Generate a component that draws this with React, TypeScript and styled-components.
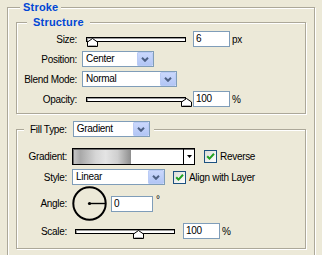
import styled, { createGlobalStyle } from "styled-components";

const GlobalStyle = createGlobalStyle`
  html, body {
    margin: 0;
    padding: 0;
    background: #ece9d8;
  }
  body {
    font-family: "Liberation Sans", Arial, sans-serif;
    font-size: 10px;
    letter-spacing: -0.3px;
    color: #000;
  }
`;

const Dialog = styled.div`
  width: 322px;
  height: 255px;
  overflow: hidden;
  padding-left: 7px;
  box-sizing: border-box;
`;

const GroupBox = styled.fieldset<{ $width?: number; $pad: string; $mt?: number }>`
  margin: ${(p) => p.$mt ?? 0}px 0 0;
  padding: ${(p) => p.$pad};
  min-width: 0;
  ${(p) => (p.$width ? `width: ${p.$width}px;` : "")}
  box-sizing: border-box;
  border: 1px solid #aca899;
  box-shadow: 1px 1px 0 #fff, inset 1px 1px 0 #fff;
`;

const Title = styled.legend<{ $ml: number; $pad: string }>`
  margin-left: ${(p) => p.$ml}px;
  padding: ${(p) => p.$pad};
  background: #ece9d8;
  font-weight: bold;
  font-size: 11px;
  line-height: 15px;
  letter-spacing: 0.2px;
  color: #0046d5;
`;

const SelectLegend = styled.legend`
  margin-left: 7px;
  padding: 0 4px 0 6px;
  background: #ece9d8;
  display: flex;
  align-items: center;
  gap: 6px;
`;

const Row = styled.div<{ $label: number; $h: number; $top?: number }>`
  display: grid;
  grid-template-columns: ${(p) => p.$label}px auto;
  column-gap: 5px;
  align-items: center;
  height: ${(p) => p.$h}px;
  margin-top: ${(p) => p.$top ?? 0}px;
`;

const Label = styled.span`
  text-align: right;
  white-space: nowrap;
`;

const Controls = styled.div`
  display: flex;
  align-items: center;
  height: 100%;
`;

const Track = styled.div<{ $width: number; $ml: number }>`
  position: relative;
  width: ${(p) => p.$width}px;
  height: 5px;
  margin-left: ${(p) => p.$ml}px;
  box-sizing: border-box;
  border: 1px solid #000;
  background: #fff;
  box-shadow: inset 1px 1px 0 #9a9a9a;
`;

const Thumb = styled.svg`
  position: absolute;
  top: 0;
  display: block;
`;

const NumberBox = styled.div<{ $width: number; $ml: number }>`
  width: ${(p) => p.$width}px;
  height: 16px;
  margin-left: ${(p) => p.$ml}px;
  box-sizing: border-box;
  border: 1px solid #7f9db9;
  background: #fff;
  padding-left: 2px;
  line-height: 14px;
`;

const Unit = styled.span<{ $ml: number; $raised?: boolean }>`
  margin-left: ${(p) => p.$ml}px;
  align-self: ${(p) => (p.$raised ? "flex-start" : "center")};
  margin-top: ${(p) => (p.$raised ? 8 : 0)}px;
`;

const SelectBox = styled.div<{ $width: number }>`
  width: ${(p) => p.$width}px;
  height: 16px;
  box-sizing: border-box;
  border: 1px solid #7f9db9;
  background: #fff;
  display: flex;
  align-items: center;
  padding: 0 0 0 3px;
  font-weight: normal;
  letter-spacing: -0.3px;
  color: #000;
`;

const SelectText = styled.span`
  flex: 1;
  line-height: 14px;
`;

const DropButton = styled.span`
  width: 16px;
  height: 14px;
  box-sizing: border-box;
  border: 1px solid #bacbf5;
  border-radius: 1px;
  background: linear-gradient(#cad8fc, #b2c6f5);
  display: flex;
  align-items: center;
  justify-content: center;
`;

const GradientPicker = styled.div`
  display: flex;
  width: 123px;
  height: 17px;
  box-sizing: border-box;
  border: 1px solid #000;
  box-shadow: inset 1px 1px 0 #6a6a6a;
  background: #fff;
`;

const GradientSwatch = styled.div`
  flex: 1;
  margin: 1px 0 0 1px;
  background: linear-gradient(
    to right,
    #c4c4c4 0%,
    #a9a9a9 6%,
    #d6d6d6 20%,
    #e4e4e4 29%,
    #cfcfcf 40%,
    #8f8f8f 52%,
    #fff 52.5%,
    #fff 100%
  );
`;

const GradientArrow = styled.div`
  width: 10px;
  border-left: 1px solid #000;
  display: flex;
  align-items: center;
  justify-content: center;
`;

const Check = styled.label<{ $ml: number }>`
  display: flex;
  align-items: center;
  gap: 3px;
  margin-left: ${(p) => p.$ml}px;
  white-space: nowrap;
`;

const CheckBox = styled.span`
  width: 13px;
  height: 13px;
  box-sizing: border-box;
  border: 1px solid #1c5180;
  background: linear-gradient(135deg, #dcdcd7, #fff);
  display: flex;
  align-items: center;
  justify-content: center;
`;

const Dial = styled.svg`
  display: block;
`;

const Chevron = () => (
  <svg width="8" height="5" viewBox="0 0 8 5">
    <polyline points="1,0.8 4,3.8 7,0.8" fill="none" stroke="#4d6185" strokeWidth="2" />
  </svg>
);

const Select = ({ value, width }: { value: string; width: number }) => (
  <SelectBox $width={width}>
    <SelectText>{value}</SelectText>
    <DropButton>
      <Chevron />
    </DropButton>
  </SelectBox>
);

const Slider = ({ pct, ml }: { pct: number; ml: number }) => (
  <Track $width={100} $ml={ml}>
    <Thumb width="11" height="9" viewBox="0 0 11 9" style={{ left: pct - 6 }}>
      <path d="M0.5 8.5 V4 L5.5 0.5 L10.5 4 V8.5 Z" fill="#fff" stroke="#000" />
      <path d="M1.5 7.5 H9.5" stroke="#b0b0b0" />
    </Thumb>
  </Track>
);

const Tick = () => (
  <CheckBox>
    <svg width="11" height="11" viewBox="0 0 11 11">
      <path d="M2.2 5.2 L4.5 7.6 L9 2.8" fill="none" stroke="#21a121" strokeWidth="2" />
    </svg>
  </CheckBox>
);

export default function App() {
  return (
    <Dialog>
      <GlobalStyle />
      <GroupBox $width={308} $pad="0 8px 14px">
        <Title $ml={4} $pad="0 3px">Stroke</Title>

        <GroupBox $pad="1px 0 6px">
          <Title $ml={10} $pad="0 6px">Structure</Title>
          <Row $label={60} $h={16}>
            <Label>Size:</Label>
            <Controls>
              <Slider pct={6} ml={4} />
              <NumberBox $width={37} $ml={7}>6</NumberBox>
              <Unit $ml={2}>px</Unit>
            </Controls>
          </Row>
          <Row $label={60} $h={16} $top={4}>
            <Label>Position:</Label>
            <Controls>
              <Select value="Center" width={72} />
            </Controls>
          </Row>
          <Row $label={60} $h={16} $top={4}>
            <Label>Blend Mode:</Label>
            <Controls>
              <Select value="Normal" width={95} />
            </Controls>
          </Row>
          <Row $label={60} $h={16} $top={4}>
            <Label>Opacity:</Label>
            <Controls>
              <Slider pct={100} ml={4} />
              <NumberBox $width={37} $ml={7}>100</NumberBox>
              <Unit $ml={2}>%</Unit>
            </Controls>
          </Row>
        </GroupBox>

        <GroupBox $pad="11px 0 9px" $mt={7}>
          <SelectLegend>
            <span>Fill Type:</span>
            <Select value="Gradient" width={77} />
          </SelectLegend>
          <Row $label={50} $h={17}>
            <Label>Gradient:</Label>
            <Controls>
              <GradientPicker>
                <GradientSwatch />
                <GradientArrow>
                  <svg width="5" height="3" viewBox="0 0 5 3">
                    <polygon points="0,0 5,0 2.5,3" fill="#000" />
                  </svg>
                </GradientArrow>
              </GradientPicker>
              <Check $ml={9}>
                <Tick />
                Reverse
              </Check>
            </Controls>
          </Row>
          <Row $label={50} $h={16} $top={4}>
            <Label>Style:</Label>
            <Controls>
              <Select value="Linear" width={93} />
              <Check $ml={8}>
                <Tick />
                Align with Layer
              </Check>
            </Controls>
          </Row>
          <Row $label={50} $h={35} $top={1}>
            <Label>Angle:</Label>
            <Controls>
              <Dial width="35" height="35" viewBox="0 0 35 35">
                <circle cx="17.5" cy="17.5" r="16.2" fill="none" stroke="#000" strokeWidth="2" />
                <line x1="17.5" y1="17.5" x2="33" y2="17.5" stroke="#000" strokeWidth="1.4" />
                <circle cx="17.5" cy="17.5" r="1.6" fill="#000" />
              </Dial>
              <NumberBox $width={42} $ml={4}>0</NumberBox>
              <Unit $ml={3} $raised>°</Unit>
            </Controls>
          </Row>
          <Row $label={50} $h={16} $top={2}>
            <Label>Scale:</Label>
            <Controls>
              <Slider pct={63} ml={3} />
              <NumberBox $width={37} $ml={8}>100</NumberBox>
              <Unit $ml={2}>%</Unit>
            </Controls>
          </Row>
        </GroupBox>
      </GroupBox>
    </Dialog>
  );
}
